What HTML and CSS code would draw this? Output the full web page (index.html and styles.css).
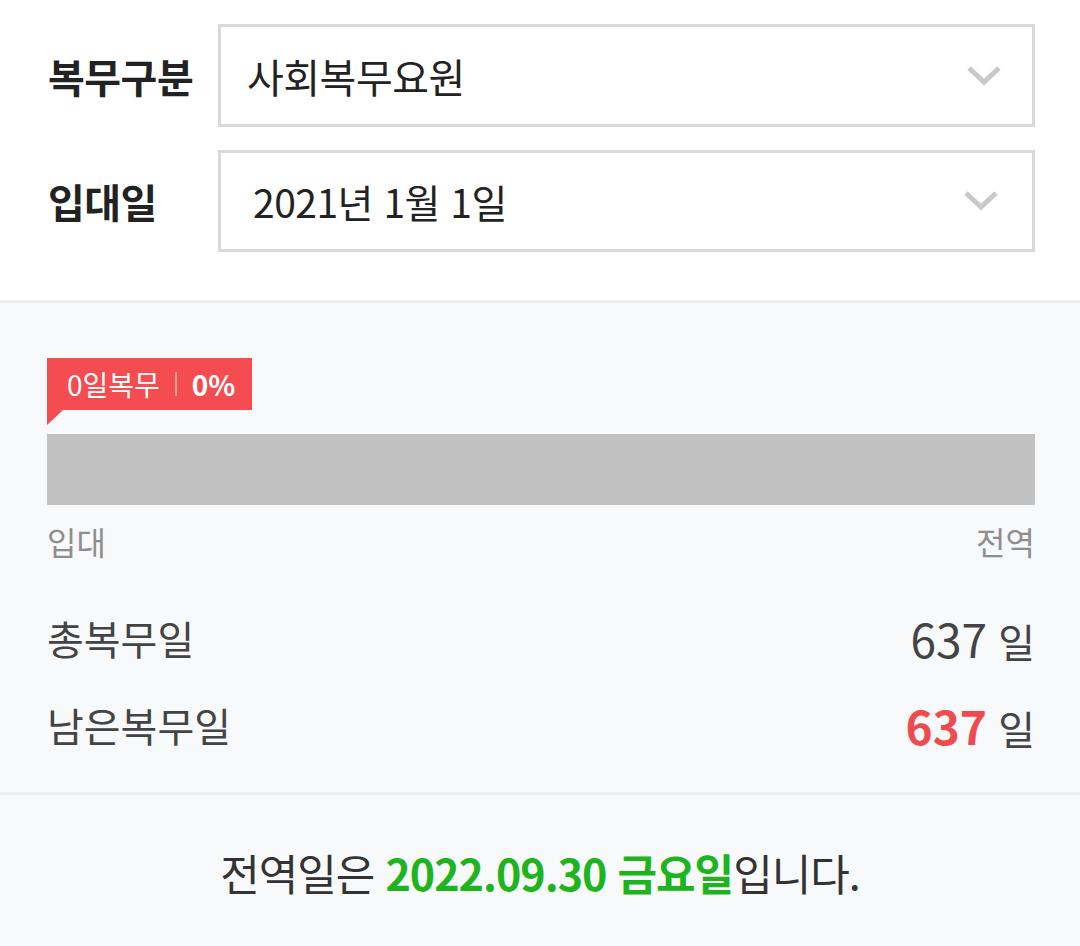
FILE: index.html
```html
<!DOCTYPE html>
<html lang="ko">
<head>
  <meta charset="UTF-8" />
  <meta name="viewport" content="width=device-width, initial-scale=1.0"/>
  <title>전역일 계산기</title>
  <link rel="stylesheet" href="styles.css">
</head>
<body>

<section class="form">
  <div class="form-row">
    <label class="form-label">복무구분</label>
    <div class="select">
      <span class="select-value">사회복무요원</span>
      <svg class="chevron" width="36" height="24" viewBox="0 0 36 24"><polyline points="3,4 18,18 33,4" fill="none" stroke="#c9c9c9" stroke-width="5"/></svg>
    </div>
  </div>
  <div class="form-row">
    <label class="form-label">입대일</label>
    <div class="select date">
      <span class="select-value">2021년 1월 1일</span>
      <svg class="chevron" width="36" height="24" viewBox="0 0 36 24"><polyline points="3,4 18,18 33,4" fill="none" stroke="#c9c9c9" stroke-width="5"/></svg>
    </div>
  </div>
</section>

<section class="stats">
  <div class="badge">
    <span>0일복무</span>
    <span class="sep"></span>
    <strong>0%</strong>
  </div>
  <div class="bar"><div class="bar-fill" style="width: 0%"></div></div>
  <div class="bar-labels">
    <span>입대</span>
    <span>전역</span>
  </div>

  <div class="stat-row">
    <span class="stat-name">총복무일</span>
    <span class="stat-value"><span class="num">637</span> 일</span>
  </div>
  <div class="stat-row">
    <span class="stat-name">남은복무일</span>
    <span class="stat-value"><span class="num red">637</span> 일</span>
  </div>
</section>

<section class="result">
  <p>전역일은 <strong class="green">2022.09.30</strong> <strong class="green">금요일</strong>입니다.</p>
</section>

</body>
</html>
```

FILE: styles.css
```css
body {
  margin: 0;
  padding: 0;
  font-family: "Noto Sans CJK KR", "Noto Sans", sans-serif;
  background: #f8f9fb;
  color: #222;
}

/* 입력 영역 */
.form {
  background: #fff;
  padding: 24px 45px 48px 48px;
  border-bottom: 3px solid #eceef0;
  display: flex;
  flex-direction: column;
  gap: 23px;
}

.form-row {
  display: flex;
  align-items: center;
}

.form-label {
  width: 170px;
  font-size: 40px;
  font-weight: bold;
  color: #222;
  letter-spacing: -0.5px;
}

.select {
  flex: 1;
  height: 97px;
  border: 3px solid #d9d9d9;
  display: flex;
  align-items: center;
  justify-content: space-between;
  padding: 0 30px 0 26px;
  box-sizing: content-box;
}

.select.date {
  height: 96px;
  padding-left: 32px;
  padding-right: 33px;
}

.select-value {
  font-size: 40px;
  color: #222;
  letter-spacing: -0.5px;
}

.select.date .select-value {
  font-size: 39px;
}

.chevron {
  display: block;
}

/* 진행 현황 */
.stats {
  padding: 55px 45px 24px 47px;
  border-bottom: 3px solid #eceef0;
}

.badge {
  position: relative;
  display: inline-flex;
  align-items: center;
  height: 52px;
  padding: 0 17px 0 20px;
  background: #f44c50;
  color: #fff;
  font-size: 28px;
  margin-bottom: 24px;
}

.badge::after {
  content: "";
  position: absolute;
  left: 0;
  top: 52px;
  border-top: 15px solid #f44c50;
  border-right: 16px solid transparent;
}

.badge .sep {
  width: 2px;
  height: 24px;
  background: #f9a1a3;
  margin: 0 15px;
}

.badge strong {
  font-weight: bold;
}

.bar {
  height: 71px;
  background: #c1c1c1;
}

.bar-fill {
  height: 100%;
  background: #f44c50;
}

.bar-labels {
  display: flex;
  justify-content: space-between;
  font-size: 32px;
  line-height: 40px;
  color: #8e8e8e;
  margin-top: 16px;
  margin-bottom: 33px;
}

.stat-row {
  display: flex;
  justify-content: space-between;
  align-items: center;
  height: 87px;
  color: #444;
}

.stat-name {
  font-size: 40px;
}

.stat-value {
  font-size: 40px;
}

.num {
  font-size: 46px;
}

.num.red {
  color: #ef4a4e;
  font-weight: bold;
}

/* 전역일 */
.result {
  text-align: center;
  padding: 47px 0 40px;
}

.result p {
  margin: 0;
  font-size: 43px;
  line-height: 60px;
  color: #333;
  letter-spacing: -1px;
}

.green {
  color: #1db41d;
  font-weight: bold;
}
```
